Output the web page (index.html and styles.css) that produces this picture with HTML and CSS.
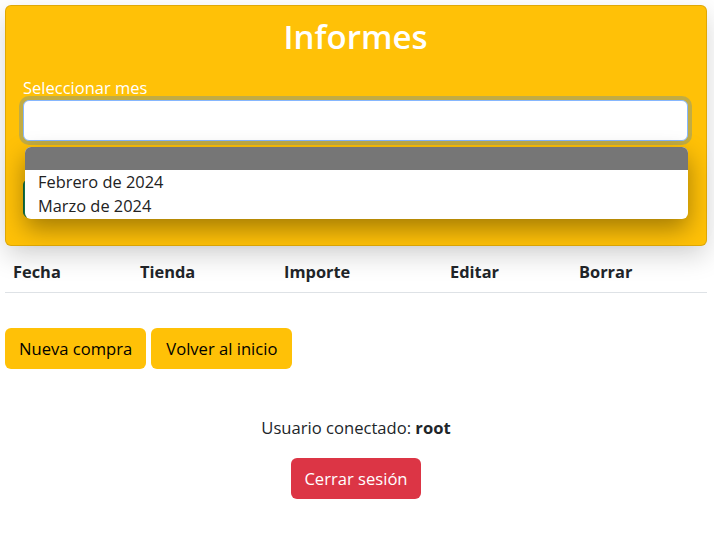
FILE: index.html
```html
<!DOCTYPE html>
<html lang="es">
<head>
<meta charset="utf-8">
<title>Informes</title>
<link rel="stylesheet" href="styles.css">
</head>
<body>
<div class="page">
  <div class="card">
    <h1 class="title">Informes</h1>
    <form class="form">
      <label class="label" for="mes">Seleccionar mes</label>
      <div class="select-wrap">
        <div class="input" id="mes"></div>
        <div class="dropdown">
          <div class="opt opt-sel"></div>
          <div class="opt">Febrero de 2024</div>
          <div class="opt">Marzo de 2024</div>
        </div>
      </div>
      <button type="button" class="btn btn-success" aria-label="Ver informe"></button>
    </form>
  </div>

  <table class="table">
    <thead>
      <tr>
        <th class="c1">Fecha</th>
        <th class="c2">Tienda</th>
        <th class="c3">Importe</th>
        <th class="c4">Editar</th>
        <th class="c5">Borrar</th>
      </tr>
    </thead>
  </table>

  <div class="actions">
    <button type="button" class="btn btn-warning">Nueva compra</button>
    <button type="button" class="btn btn-warning btn-wide">Volver al inicio</button>
  </div>

  <div class="session">
    <p class="user">Usuario conectado: <strong>root</strong></p>
    <button type="button" class="btn btn-danger">Cerrar sesión</button>
  </div>
</div>
</body>
</html>
```

FILE: styles.css
```css
* { box-sizing: border-box; }
html, body { margin: 0; padding: 0; background: #fff; }
body {
  font-family: "Open Sans", "Noto Sans", sans-serif;
  font-size: 16.6px;
  line-height: 24px;
  color: #212529;
}
.page { padding: 5px 7px 40px 5px; }

.card {
  background: #ffc107;
  border: 1px solid rgba(0,0,0,0.125);
  border-radius: 6px;
  padding: 11px 18px 0 17px;
  height: 241px;
  box-shadow: 0 10px 26px rgba(0,0,0,0.17);
  position: relative;
}
.title {
  margin: 0 0 19px;
  text-align: center;
  color: #fff;
  font-size: 33px;
  font-weight: 600;
  line-height: 40px;
}
.form { margin: 0; }
.label {
  display: block;
  color: #fff;
  font-size: 16.5px;
  line-height: 24px;
}
.select-wrap { position: relative; }
.input {
  height: 41px;
  background: #fff;
  border: 1px solid #86b7fe;
  border-radius: 6px;
  box-shadow: 0 0 0 4px rgba(13,110,253,0.25);
}
.dropdown {
  position: absolute;
  left: 2px;
  right: 0;
  top: 47px;
  padding-bottom: 1px;
  background: #fff;
  border-radius: 6px;
  overflow: hidden;
  box-shadow: 0 10px 24px rgba(0,0,0,0.36);
  z-index: 2;
}
.opt {
  height: 24px;
  line-height: 24px;
  padding-left: 13px;
  color: #222;
  font-size: 16.4px;
}
.opt-sel { background: #767676; height: 23px; }

.btn {
  font-family: inherit;
  font-size: 16.6px;
  line-height: 24px;
  padding: 8px 13px;
  height: 41px;
  border: 1px solid transparent;
  border-radius: 6px;
  cursor: pointer;
}
.btn-wide { padding: 8px 14px; }
.btn-success {
  display: block;
  margin-top: 38px;
  width: 120px;
  background: #198754;
  border-color: #146c43;
  height: 39px;
}
.btn-warning { background: #ffc107; color: #000; }
.btn-danger { background: #dc3545; color: #fff; padding: 8px 12px; }

.table {
  width: 100%;
  border-collapse: collapse;
  margin-top: 6px;
}
.table th {
  text-align: left;
  font-weight: 700;
  font-size: 16.4px;
  padding: 8px;
  line-height: 24px;
  border-bottom: 1px solid #dee2e6;
}
.c1 { width: 127px; }
.c2 { width: 144px; }
.c3 { width: 166px; }
.c4 { width: 129px; }

.actions {
  margin-top: 35px;
  display: flex;
  gap: 5px;
}
.session {
  margin-top: 47px;
  text-align: center;
}
.user { margin: 0 0 18px; line-height: 24px; }
```
